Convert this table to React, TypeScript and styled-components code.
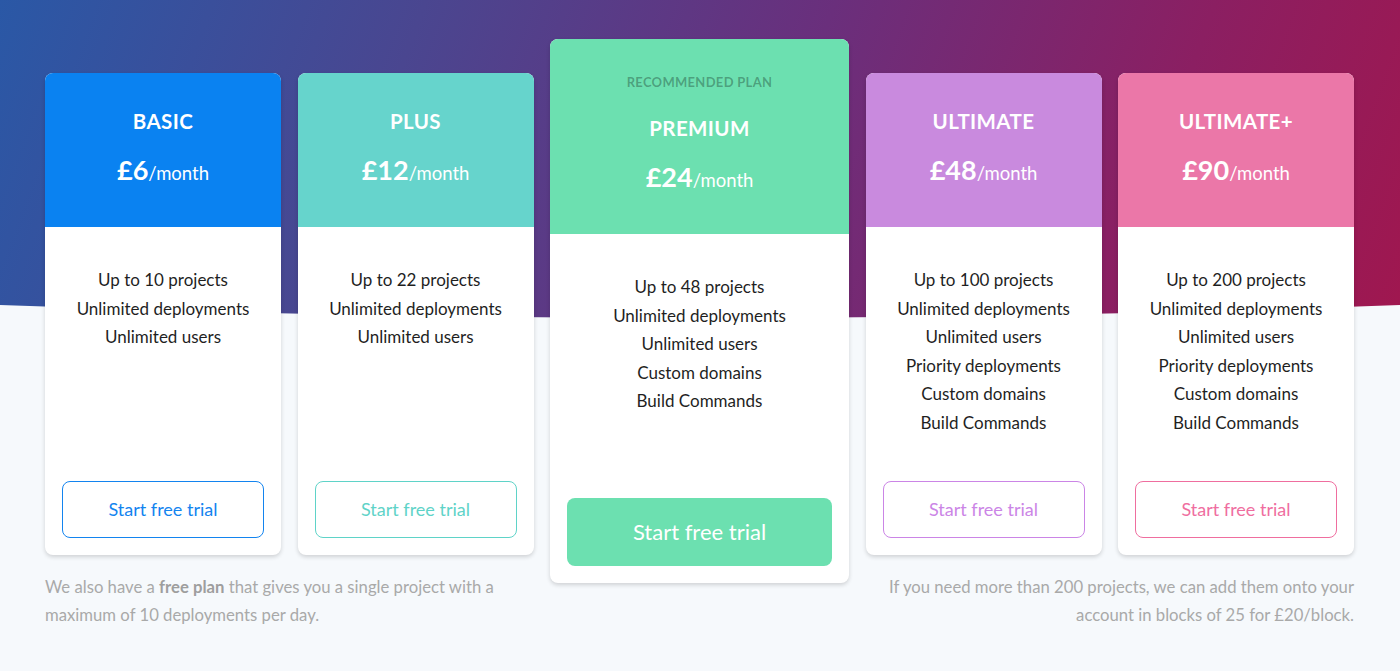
import React from "react";
import styled, { createGlobalStyle } from "styled-components";

const Global = createGlobalStyle`
  html, body { margin: 0; padding: 0; }
  body {
    background: #f6f9fc;
    font-family: "Lato", "Open Sans", sans-serif;
    -webkit-font-smoothing: antialiased;
  }
`;

const Page = styled.div`
  position: relative;
  width: 1400px;
  height: 671px;
  overflow: hidden;
  background: #f6f9fc;
`;

const Backdrop = styled.div`
  position: absolute;
  inset: 0 0 auto 0;
  height: 330px;
  background: linear-gradient(110deg, #2a58a6 0%, #4a4690 28%, #6a2f7c 55%, #8b1f62 80%, #a0174f 100%);
  clip-path: path("M0 0 H1400 V305 Q700 331 0 305 Z");
`;

const Content = styled.div`
  position: relative;
  padding: 73px 46px 0 45px;
`;

const Row = styled.div`
  display: flex;
  align-items: stretch;
  gap: 16.5px;
`;

const Card = styled.div<{ $featured?: boolean }>`
  width: ${(p) => (p.$featured ? 299 : 236)}px;
  flex: none;
  display: flex;
  flex-direction: column;
  background: #fff;
  border-radius: 8px;
  overflow: hidden;
  box-shadow: 0 2px 4px rgba(0, 0, 0, 0.16);
  margin: ${(p) => (p.$featured ? "-34px 0 -28px" : "0")};
`;

const Header = styled.div<{ $bg: string; $featured?: boolean }>`
  background: ${(p) => p.$bg};
  height: ${(p) => (p.$featured ? 195 : 154)}px;
  box-sizing: border-box;
  padding-top: ${(p) => (p.$featured ? 26 : 34)}px;
  display: flex;
  flex-direction: column;
  align-items: center;
  color: #fff;
`;

const Tag = styled.div`
  font-size: 13px;
  font-weight: 700;
  letter-spacing: 0.3px;
  color: rgba(0, 0, 0, 0.3);
  line-height: 34px;
  margin-bottom: 15px;
`;

const Name = styled.div`
  font-size: 20.5px;
  font-weight: 700;
  letter-spacing: 0.4px;
  line-height: 28px;
`;

const Price = styled.div`
  margin-top: 18px;
  line-height: 34px;
  font-size: 18.5px;
  font-weight: 400;
  b {
    font-size: 27px;
    font-weight: 700;
  }
`;

const Body = styled.div`
  flex: 1;
  display: flex;
  flex-direction: column;
  padding: 39px 17px 17px;
`;

const Features = styled.ul`
  list-style: none;
  margin: 0 0 43px;
  padding: 0;
  text-align: center;
  color: #1f1f1f;
  font-size: 17px;
  line-height: 28.6px;
`;

const Button = styled.button<{ $color: string; $filled?: boolean }>`
  margin-top: auto;
  height: ${(p) => (p.$filled ? 68 : 57)}px;
  width: 100%;
  border-radius: 8px;
  font-family: inherit;
  font-size: ${(p) => (p.$filled ? 22 : 18)}px;
  cursor: pointer;
  border: ${(p) => (p.$filled ? "none" : `1.8px solid ${p.$color}`)};
  background: ${(p) => (p.$filled ? p.$color : "#fff")};
  color: ${(p) => (p.$filled ? "#fff" : p.$color)};
`;

const Footer = styled.div`
  display: flex;
  justify-content: space-between;
  margin-top: 18px;
  font-size: 16.7px;
  line-height: 28px;
  color: #a9a9a9;
  b { font-weight: 700; color: #9e9e9e; }
`;

const Note = styled.p<{ $right?: boolean }>`
  margin: 0;
  text-align: ${(p) => (p.$right ? "right" : "left")};
`;

type Plan = {
  name: string;
  price: string;
  header: string;
  accent: string;
  features: string[];
  featured?: boolean;
};

const plans: Plan[] = [
  { name: "BASIC", price: "6", header: "#0a82f1", accent: "#1384ef", features: ["Up to 10 projects", "Unlimited deployments", "Unlimited users"] },
  { name: "PLUS", price: "12", header: "#66d4cc", accent: "#5fd3c8", features: ["Up to 22 projects", "Unlimited deployments", "Unlimited users"] },
  { name: "PREMIUM", price: "24", header: "#6ce0b0", accent: "#6ce0b0", featured: true, features: ["Up to 48 projects", "Unlimited deployments", "Unlimited users", "Custom domains", "Build Commands"] },
  { name: "ULTIMATE", price: "48", header: "#c98ade", accent: "#cb85e6", features: ["Up to 100 projects", "Unlimited deployments", "Unlimited users", "Priority deployments", "Custom domains", "Build Commands"] },
  { name: "ULTIMATE+", price: "90", header: "#eb77a8", accent: "#ef6e9f", features: ["Up to 200 projects", "Unlimited deployments", "Unlimited users", "Priority deployments", "Custom domains", "Build Commands"] },
];

export default function App() {
  return (
    <Page>
      <Global />
      <Backdrop />
      <Content>
        <Row>
          {plans.map((p) => (
            <Card key={p.name} $featured={p.featured}>
              <Header $bg={p.header} $featured={p.featured}>
                {p.featured && <Tag>RECOMMENDED PLAN</Tag>}
                <Name>{p.name}</Name>
                <Price>
                  <b>£{p.price}</b>/month
                </Price>
              </Header>
              <Body>
                <Features>
                  {p.features.map((f) => (
                    <li key={f}>{f}</li>
                  ))}
                </Features>
                <Button $color={p.accent} $filled={p.featured}>
                  Start free trial
                </Button>
              </Body>
            </Card>
          ))}
        </Row>
        <Footer>
          <Note>
            We also have a <b>free plan</b> that gives you a single project with a
            <br />
            maximum of 10 deployments per day.
          </Note>
          <Note $right>
            If you need more than 200 projects, we can add them onto your
            <br />
            account in blocks of 25 for £20/block.
          </Note>
        </Footer>
      </Content>
    </Page>
  );
}
